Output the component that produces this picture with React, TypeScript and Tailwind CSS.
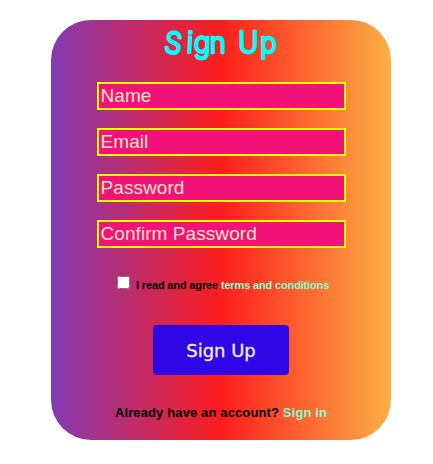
const fields = [
  { label: 'Name', type: 'text' },
  { label: 'Email', type: 'email' },
  { label: 'Password', type: 'password' },
  { label: 'Confirm Password', type: 'password' },
];

// Rounded marker-style lettering for the heading
function Title() {
  return (
    <h1 className="h-[45px]">
      <svg width="116" height="45" viewBox="0 0 116 45" role="img" aria-label="Sign Up" className="block overflow-visible">
        <text
          transform="scale(0.93 1)"
          x="0.6 25 33 50.4 67 81 104.6"
          y="32 32.6 32.6 32.6 32.6 32.6 32.6"
          rotate="8 3 2 0 0 0 0"
          className="fill-[#00ffff] stroke-[#00ffff] stroke-[2.4px] text-[29.5px] font-light font-['Inter',sans-serif] [stroke-linejoin:round] [stroke-linecap:round]"
        >
          Sign Up
        </text>
      </svg>
    </h1>
  );
}

export default function App() {
  return (
    <main className="flex h-[464px] w-[433px] bg-white pt-5 pl-[51px] font-['Liberation_Sans',Arial,sans-serif]">
      <form className="flex h-[420px] w-[340px] flex-col items-center rounded-[40px] bg-[linear-gradient(90deg,#833ab4_0%,#fd1d1d_50%,#fcb045_100%)]">
        <Title />
        <div className="mt-[17px] ml-px flex flex-col gap-[18px]">
          {fields.map((field) => (
            <input
              key={field.label}
              type={field.type}
              placeholder={field.label}
              aria-label={field.label}
              className="h-7 w-[249px] border-2 border-[#ffff00] bg-[#f31378] px-[1.5px] py-0 text-[19px] leading-6 tracking-[0.07px] placeholder:text-[#ffe4c4] placeholder:opacity-100"
            />
          ))}
        </div>
        <div className="mt-7 flex h-[18px] items-start self-start pl-[66px]">
          <input type="checkbox" aria-label="Agree to terms" className="size-[13px]" />
          <span className="ml-[6px] text-[11px] leading-[18px] font-bold tracking-[-0.15px] whitespace-nowrap text-black">
            I read and agree <a href="#terms" className="text-[#7fffd4]">terms and conditions</a>
          </span>
        </div>
        <button
          type="button"
          className="mt-[31px] h-[50px] w-[136px] rounded-[4px] bg-[#2f06e6] font-['DejaVu_Sans',Verdana,sans-serif] text-[18px] text-[#faebd7] [-webkit-text-stroke:0.3px_#faebd7]"
        >
          Sign Up
        </button>
        <p className="mt-[29px] text-[13px] leading-[18px] font-bold tracking-[0.13px] whitespace-nowrap text-black">
          Already have an account? <a href="#signin" className="text-[#7fffd4]">Sign in</a>
        </p>
      </form>
    </main>
  );
}
